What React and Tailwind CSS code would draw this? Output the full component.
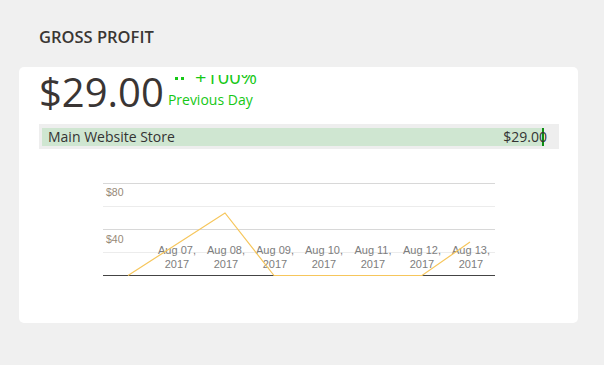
export default function App() {
  const xs = [74, 123, 172, 221, 270, 319, 368];
  const days = ["07", "08", "09", "10", "11", "12", "13"];
  return (
    <div className="w-[604px] h-[365px] bg-[#f0f0f0] pt-[27px]" style={{ fontFamily: '"Open Sans", sans-serif' }}>
      <div className="pl-[39px] text-[16.5px] leading-[20px] font-semibold text-[#3a3633]">GROSS PROFIT</div>
      <div className="mt-[20px] ml-[19px] w-[559px] h-[256px] bg-white rounded-[5px] px-[20px] pt-[5px]">
        <div className="flex items-start">
          <div className="text-[40px] leading-[40px] text-[#3a3534]">$29.00</div>
          <div className="ml-[4px] mt-[3px] text-[#16c816]">
            <div className="h-[11px] overflow-hidden">
              <div className="-mt-[8px] flex items-start text-[20px] leading-[20px]">
                <svg width="27" height="20" viewBox="0 0 27 20" className="shrink-0">
                  <rect x="7" y="10" width="3" height="3" fill="#16c816" />
                  <rect x="13" y="10" width="3" height="3" fill="#16c816" />
                </svg>
                <span>+100%</span>
              </div>
            </div>
            <div className="mt-[4px] text-[14px] leading-[20px]">Previous Day</div>
          </div>
        </div>
        <div className="relative mt-[12px] w-[520px] h-[25px] bg-[#eeeeee] pt-[4px] pl-[3px]">
          <div className="h-[18px] w-[502px] bg-[#cfe6d1] border-r-2 border-[#0e8f14]" />
          <div className="absolute inset-0 flex items-center justify-between pl-[9px] pr-[12px] text-[14px] text-[#333333]">
            <span>Main Website Store</span>
            <span>$29.00</span>
          </div>
        </div>
        <div className="mx-auto mt-[31px] w-[392px]">
          <svg width="392" height="100" viewBox="0 0 392 100" style={{ fontFamily: '"Liberation Sans", Arial, sans-serif' }}>
            <line x1="0" y1="3.5" x2="392" y2="3.5" stroke="#d8d8d8" strokeWidth="1" />
            <line x1="0" y1="26.5" x2="392" y2="26.5" stroke="#ececec" strokeWidth="1" />
            <line x1="0" y1="49.5" x2="392" y2="49.5" stroke="#d8d8d8" strokeWidth="1" />
            <line x1="0" y1="72.5" x2="392" y2="72.5" stroke="#ececec" strokeWidth="1" />
            <text x="3" y="16" fontSize="10.5" fill="#978977">$80</text>
            <text x="3" y="63" fontSize="10.5" fill="#978977">$40</text>
            {xs.map((x, i) => (
              <g key={i}>
                <text x={x} y="74" fontSize="11" fill="#7d7d7d" textAnchor="middle">{`Aug ${days[i]},`}</text>
                <text x={x} y="87.5" fontSize="11" fill="#7d7d7d" textAnchor="middle">2017</text>
              </g>
            ))}
            <line x1="0" y1="95.5" x2="392" y2="95.5" stroke="#444444" strokeWidth="1" />
            <polyline points="25,95.5 122,33 171,95.5 319,95.5 367,62" fill="none" stroke="#f6c65c" strokeWidth="1.2" />
          </svg>
        </div>
      </div>
    </div>
  );
}
